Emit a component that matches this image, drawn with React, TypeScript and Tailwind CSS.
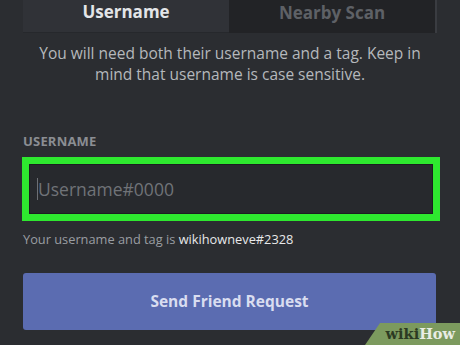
import { useState } from "react";

const font = { fontFamily: '"Open Sans", "Noto Sans", sans-serif' };

const Tabs = () => (
    <div className="flex mx-[23px] h-[33px]">
        <div className="flex-1 flex items-center justify-center bg-[#303237] border-b border-[#26282c] text-[#e3e5e8] font-bold text-[17px] pb-[8px]">
            Username
        </div>
        <div className="flex-1 flex items-center justify-center bg-[#222326] border-r-2 border-[#3a3c41] text-[#5e6166] font-bold text-[17px] pb-[8px]">
            Nearby Scan
        </div>
    </div>
);

export default function App() {
    const [txt, setTxt] = useState("");

    return (
        <div className="relative w-[460px] h-[345px] overflow-hidden bg-[#2b2d31]" style={font}>
            <Tabs />

            <p className="mt-[10px] px-[30px] text-center text-[15.5px] leading-[21px] text-[#b5b8bc]">
                You will need both their username and a tag. Keep in mind that username is case sensitive.
            </p>

            <div className="px-[23px] mt-[50px]">
                <div className="text-[13px] font-bold tracking-[0.2px] text-[#8b8e93] leading-none">USERNAME</div>

                <div className="mt-[9px] -ml-[1px] w-[418px] h-[64px] p-[7px] bg-[#2ee82f]">
                    <div className="flex items-center h-full bg-[#27292d] border border-[#1c1d20]">
                        <span className="ml-[7px] w-[1px] h-[22px] bg-[#6d7075]" />
                        <input
                            value={txt}
                            onChange={(e) => setTxt(e.target.value)}
                            placeholder="Username#0000"
                            className="flex-1 bg-transparent outline-none text-[17.5px] text-[#dcddde] placeholder:text-[#707378]"
                            style={font}
                        />
                    </div>
                </div>

                <div className="mt-[12px] text-[12.8px] text-[#9a9da2] leading-none">
                    Your username and tag is <span className="text-[#e8e9ea]">wikihowneve#2328</span>
                </div>

                <button className="mt-[27px] w-[413px] h-[57px] rounded-[3px] bg-[#5b6cb1] text-[#d9ddf0] font-bold text-[15.5px]">
                    Send Friend Request
                </button>
            </div>

            <div className="absolute right-0 bottom-0 w-[95px] h-[22px] bg-[#7c9a5e] [clip-path:polygon(15px_0,100%_0,100%_100%,0_100%)] flex items-center justify-end pr-[5px]">
                <span className="text-[14.5px] font-bold leading-none" style={{ fontFamily: '"DejaVu Serif", "Liberation Serif", serif' }}>
                    <span className="text-[#2c3a22]">wiki</span>
                    <span className="text-[#e9ede4]">How</span>
                </span>
            </div>
        </div>
    );
}
